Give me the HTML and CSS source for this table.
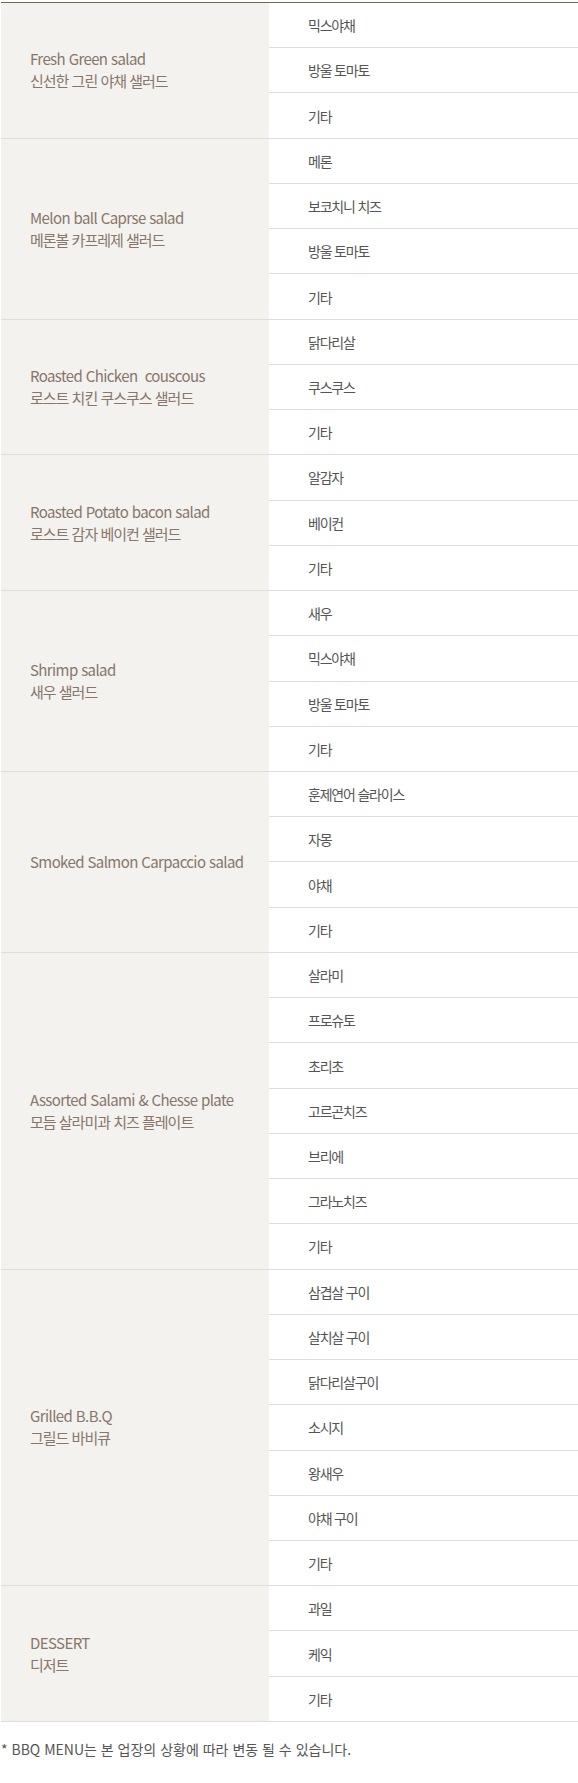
FILE: index.html
```html
<!DOCTYPE html>
<html lang="ko">
<head>
<meta charset="utf-8">
<title>BBQ MENU</title>
<link rel="stylesheet" href="styles.css">
</head>
<body>
<div class="menu">
  <div class="group">
    <div class="name"><span class="en">Fresh Green salad</span><span class="ko">신선한 그린 야채 샐러드</span></div>
    <ul class="items"><li>믹스야채</li><li>방울 토마토</li><li>기타</li></ul>
  </div>
  <div class="group">
    <div class="name"><span class="en">Melon ball Caprse salad</span><span class="ko">메론볼 카프레제 샐러드</span></div>
    <ul class="items"><li>메론</li><li>보코치니 치즈</li><li>방울 토마토</li><li>기타</li></ul>
  </div>
  <div class="group">
    <div class="name"><span class="en">Roasted Chicken&nbsp; couscous</span><span class="ko">로스트 치킨 쿠스쿠스 샐러드</span></div>
    <ul class="items"><li>닭다리살</li><li>쿠스쿠스</li><li>기타</li></ul>
  </div>
  <div class="group">
    <div class="name"><span class="en">Roasted Potato bacon salad</span><span class="ko">로스트 감자 베이컨 샐러드</span></div>
    <ul class="items"><li>알감자</li><li>베이컨</li><li>기타</li></ul>
  </div>
  <div class="group">
    <div class="name"><span class="en">Shrimp salad</span><span class="ko">새우 샐러드</span></div>
    <ul class="items"><li>새우</li><li>믹스야채</li><li>방울 토마토</li><li>기타</li></ul>
  </div>
  <div class="group">
    <div class="name"><span class="en">Smoked Salmon Carpaccio salad</span></div>
    <ul class="items"><li>훈제연어 슬라이스</li><li>자몽</li><li>야채</li><li>기타</li></ul>
  </div>
  <div class="group">
    <div class="name"><span class="en">Assorted Salami &amp; Chesse plate</span><span class="ko">모듬 살라미과 치즈 플레이트</span></div>
    <ul class="items"><li>살라미</li><li>프로슈토</li><li>초리초</li><li>고르곤치즈</li><li>브리에</li><li>그라노치즈</li><li>기타</li></ul>
  </div>
  <div class="group">
    <div class="name"><span class="en">Grilled B.B.Q</span><span class="ko">그릴드 바비큐</span></div>
    <ul class="items"><li>삼겹살 구이</li><li>살치살 구이</li><li>닭다리살구이</li><li>소시지</li><li>왕새우</li><li>야채 구이</li><li>기타</li></ul>
  </div>
  <div class="group">
    <div class="name"><span class="en">DESSERT</span><span class="ko">디저트</span></div>
    <ul class="items"><li>과일</li><li>케익</li><li>기타</li></ul>
  </div>
</div>
<p class="note">* BBQ MENU는 본 업장의 상황에 따라 변동 될 수 있습니다.</p>
</body>
</html>
```
FILE: styles.css
```css
html, body {
  margin: 0;
  padding: 0;
  background: #fff;
}
body {
  padding: 2px 0 0 1px;
  font-family: "Noto Sans CJK KR", "Noto Sans", sans-serif;
}
.menu {
  border-top: 1px solid #7a6552;
}
.group {
  display: flex;
}
.name {
  width: 268px;
  flex: none;
  box-sizing: border-box;
  padding-left: 29px;
  background: #f3f2ee;
  border-bottom: 1px solid #dddddd;
  display: flex;
  flex-direction: column;
  justify-content: center;
  font-size: 15px;
  line-height: 22px;
  color: #88766a;
}
.name .en {
  letter-spacing: -0.6px;
}
.name .ko {
  letter-spacing: -1px;
}
.items {
  list-style: none;
  margin: 0;
  padding: 0;
  flex: 1;
}
.items li {
  box-sizing: border-box;
  height: 45.24px;
  border-bottom: 1px solid #dddddd;
  padding-left: 39px;
  display: flex;
  align-items: center;
  font-size: 14px;
  letter-spacing: -1.2px;
  color: #555555;
}
.note {
  margin: 16px 0 0 0;
  font-size: 14px;
  line-height: 22px;
  color: #555555;
  letter-spacing: 0;
}
```
